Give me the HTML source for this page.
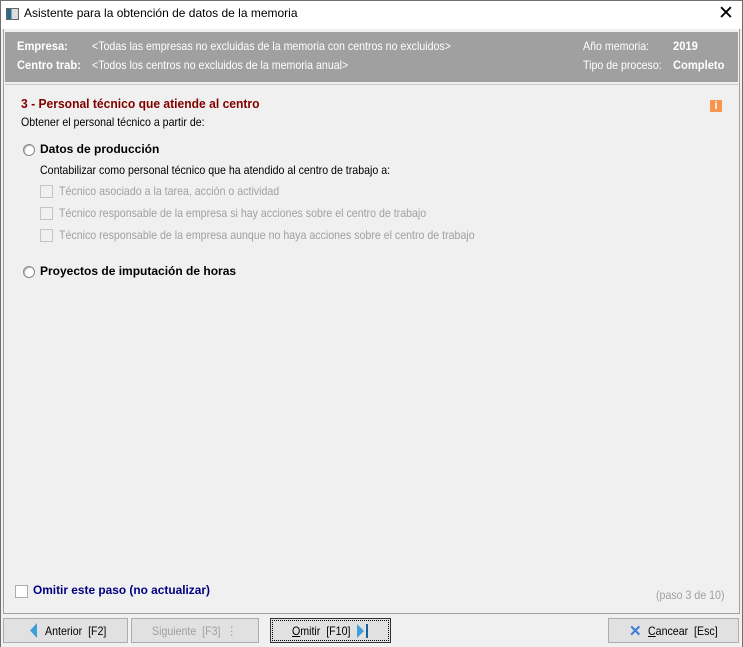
<!DOCTYPE html>
<html><head><meta charset="utf-8"><style>
*{margin:0;padding:0;box-sizing:border-box}
body{width:743px;height:647px;overflow:hidden;background:#f0f0f0;font-family:"Liberation Sans",sans-serif;font-size:12px;color:#000;position:relative}
.a{position:absolute;white-space:nowrap}
.n{display:inline-block;transform:scaleX(.885);transform-origin:left center;white-space:nowrap}
.nb{font-weight:bold}
.w{display:inline-block;transform:scaleX(.93);transform-origin:left center;white-space:nowrap;font-weight:bold}
.chk{position:absolute;width:13px;height:13px;border:1px solid #adadad;background:#fff}
.chk.d{background:#f0f0f0;border-color:#c4c4c4}
.rad{position:absolute;width:12px;height:12px;border-radius:50%;border:1px solid #888;background:#fff;box-shadow:inset 1px 1px 0 #bbb}
.btn{position:absolute;top:618px;height:25px;background:#e1e1e1;border:1px solid #adadad;white-space:nowrap}
.btn > span{position:absolute;top:5px;white-space:nowrap}
</style></head><body>
<div class="a" style="left:0;top:0;width:743px;height:29px;background:#fff;border:1px solid #707070;border-bottom:none"></div>
<div class="a" style="left:0;top:0;width:1px;height:647px;background:#707070"></div>
<div class="a" style="left:742px;top:0;width:1px;height:647px;background:#707070"></div>
<div class="a" style="left:6px;top:8px;width:13px;height:12px;border:1px solid #666;background:linear-gradient(90deg,#2a6a8a 0 40%,#ddd 40%)"></div>
<div class="a" style="left:24px;top:6px;font-size:12px">Asistente para la obtención de datos de la memoria</div>
<div class="a" style="left:718px;top:2px;font-size:19px;font-weight:300">✕</div>

<div class="a" style="left:3px;top:29px;width:737px;height:585px;border:1px solid #a0a0a0;border-top:none"></div>
<div class="a" style="left:5px;top:32px;width:733px;height:50px;background:#a0a0a0"></div>
<div class="a" style="left:5px;top:84px;width:733px;height:1px;background:#c8c8c8"></div>
<div class="a" style="left:17px;top:39px;color:#fff"><span class="w">Empresa:</span></div>
<div class="a" style="left:17px;top:58px;color:#fff"><span class="w">Centro trab:</span></div>
<div class="a" style="left:92px;top:39px;color:#fff"><span class="n">&lt;Todas las empresas no excluidas de la memoria con centros no excluidos&gt;</span></div>
<div class="a" style="left:92px;top:58px;color:#fff"><span class="n">&lt;Todos los centros no excluidos de la memoria anual&gt;</span></div>
<div class="a" style="left:583px;top:39px;color:#fff"><span class="n">Año memoria:</span></div>
<div class="a" style="left:583px;top:58px;color:#fff"><span class="n">Tipo de proceso:</span></div>
<div class="a" style="left:673px;top:39px;color:#fff"><span class="w">2019</span></div>
<div class="a" style="left:673px;top:58px;color:#fff"><span class="w">Completo</span></div>

<div class="a" style="left:21px;top:96px;color:#800000;font-size:13px"><span class="w">3 - Personal técnico que atiende al centro</span></div>
<div class="a" style="left:710px;top:100px;width:12px;height:12px;background:#f7944e;color:#fff;font-weight:bold;font-size:11px;line-height:12px;text-align:center">i</div>
<div class="a" style="left:21px;top:115px"><span class="n">Obtener el personal técnico a partir de:</span></div>

<div class="rad" style="left:23px;top:144px"></div>
<div class="a nb" style="left:40px;top:142px">Datos de producción</div>
<div class="a" style="left:40px;top:163px"><span class="n">Contabilizar como personal técnico que ha atendido al centro de trabajo a:</span></div>
<div class="chk d" style="left:40px;top:185px"></div>
<div class="a" style="left:59px;top:184px;color:#a0a0a0"><span class="n">Técnico asociado a la tarea, acción o actividad</span></div>
<div class="chk d" style="left:40px;top:207px"></div>
<div class="a" style="left:59px;top:206px;color:#a0a0a0"><span class="n">Técnico responsable de la empresa si hay acciones sobre el centro de trabajo</span></div>
<div class="chk d" style="left:40px;top:229px"></div>
<div class="a" style="left:59px;top:228px;color:#a0a0a0"><span class="n">Técnico responsable de la empresa aunque no haya acciones sobre el centro de trabajo</span></div>
<div class="rad" style="left:23px;top:266px"></div>
<div class="a nb" style="left:40px;top:264px">Proyectos de imputación de horas</div>

<div class="chk" style="left:15px;top:585px"></div>
<div class="a" style="left:33px;top:583px;color:#000080"><span class="w" style="transform:scaleX(.99)">Omitir este paso (no actualizar)</span></div>
<div class="a" style="left:656px;top:588px;color:#a0a0a0"><span class="n">(paso 3 de 10)</span></div>

<div class="btn" style="left:3px;width:125px">
<svg class="a" style="left:26px;top:4px" width="8" height="15"><polygon points="7,0 7,15 0,7.5" fill="#3b9fd8"/></svg>
<span style="left:41px"><span class="n">Anterior&nbsp; [F2]</span></span></div>
<div class="btn" style="left:131px;width:128px"><span style="left:20px;color:#a0a0a0"><span class="n">Siguiente&nbsp; [F3]&nbsp; ⋮</span></span></div>
<div class="btn" style="left:270px;width:121px;border-color:#333;outline:1px dotted #000;outline-offset:-3px">
<span style="left:21px"><span class="n"><u>O</u>mitir&nbsp; [F10]</span></span>
<svg class="a" style="left:86px;top:5px" width="12" height="14"><polygon points="0,0 7,7 0,14" fill="#3b9fd8"/><rect x="9" y="0" width="2" height="14" fill="#1a5fa0"/></svg></div>
<div class="btn" style="left:608px;width:131px">
<span style="left:20px;top:3px;color:#3b7dd8;font-size:15px;font-weight:bold">✕</span>
<span style="left:39px"><span class="n"><u>C</u>ancear&nbsp; [Esc]</span></span></div>
</body></html>
